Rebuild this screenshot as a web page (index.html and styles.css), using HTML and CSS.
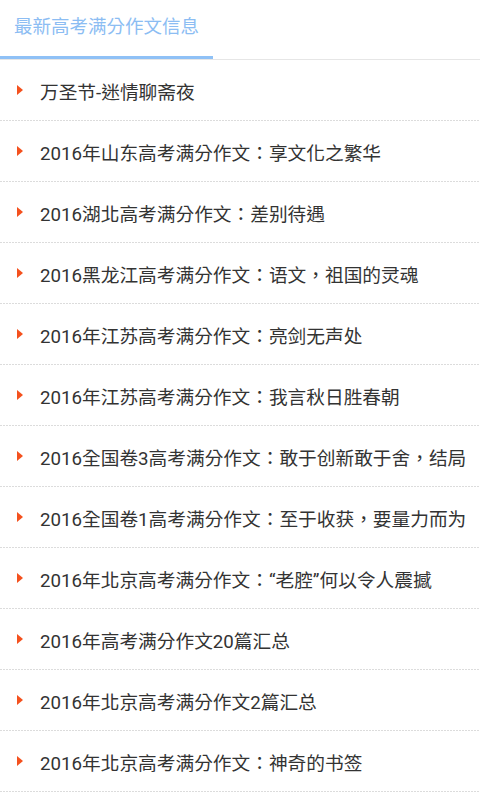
FILE: index.html
```html
<!DOCTYPE html>
<html lang="zh-TW">

<head>
    <meta charset="UTF-8">
    <title>最新高考满分作文信息</title>
    <link rel="stylesheet" href="styles.css">
</head>

<body>

    <div class="header">
        <div class="tab">最新高考满分作文信息</div>
    </div>

    <ul class="list">
        <li><span class="arrow"><svg width="6" height="10" viewBox="0 0 6 10"><polygon points="0,0 6,5 0,10" /></svg></span>万圣节-迷情聊斋夜</li>
        <li><span class="arrow"><svg width="6" height="10" viewBox="0 0 6 10"><polygon points="0,0 6,5 0,10" /></svg></span>2016年山东高考满分作文：享文化之繁华</li>
        <li><span class="arrow"><svg width="6" height="10" viewBox="0 0 6 10"><polygon points="0,0 6,5 0,10" /></svg></span>2016湖北高考满分作文：差别待遇</li>
        <li><span class="arrow"><svg width="6" height="10" viewBox="0 0 6 10"><polygon points="0,0 6,5 0,10" /></svg></span>2016黑龙江高考满分作文：语文，祖国的灵魂</li>
        <li><span class="arrow"><svg width="6" height="10" viewBox="0 0 6 10"><polygon points="0,0 6,5 0,10" /></svg></span>2016年江苏高考满分作文：亮剑无声处</li>
        <li><span class="arrow"><svg width="6" height="10" viewBox="0 0 6 10"><polygon points="0,0 6,5 0,10" /></svg></span>2016年江苏高考满分作文：我言秋日胜春朝</li>
        <li><span class="arrow"><svg width="6" height="10" viewBox="0 0 6 10"><polygon points="0,0 6,5 0,10" /></svg></span>2016全国卷3高考满分作文：敢于创新敢于舍，结局</li>
        <li><span class="arrow"><svg width="6" height="10" viewBox="0 0 6 10"><polygon points="0,0 6,5 0,10" /></svg></span>2016全国卷1高考满分作文：至于收获，要量力而为</li>
        <li><span class="arrow"><svg width="6" height="10" viewBox="0 0 6 10"><polygon points="0,0 6,5 0,10" /></svg></span>2016年北京高考满分作文：“老腔”何以令人震撼</li>
        <li><span class="arrow"><svg width="6" height="10" viewBox="0 0 6 10"><polygon points="0,0 6,5 0,10" /></svg></span>2016年高考满分作文20篇汇总</li>
        <li><span class="arrow"><svg width="6" height="10" viewBox="0 0 6 10"><polygon points="0,0 6,5 0,10" /></svg></span>2016年北京高考满分作文2篇汇总</li>
        <li><span class="arrow"><svg width="6" height="10" viewBox="0 0 6 10"><polygon points="0,0 6,5 0,10" /></svg></span>2016年北京高考满分作文：神奇的书签</li>
    </ul>

</body>

</html>
```

FILE: styles.css
```css
body {
    margin: 0;
    background: #fff;
    font-family: Roboto, "Noto Sans CJK TC", sans-serif;
    overflow: hidden;
}

.header {
    height: 59px;
    border-bottom: 1px solid #e6e6e6;
}

.tab {
    width: 213px;
    height: 59px;
    line-height: 54px;
    padding-left: 14px;
    box-sizing: border-box;
    border-bottom: 3px solid #8fc1f6;
    color: #8cbdf3;
    font-size: 18.5px;
    white-space: nowrap;
}

.list {
    margin: 0;
    padding: 0;
    list-style: none;
}

.list li {
    display: flex;
    align-items: center;
    height: 60px;
    padding-bottom: 1px;
    color: #333;
    font-size: 18.7px;
    white-space: nowrap;
    background: repeating-linear-gradient(to right, #dcdcdc 0 2px, transparent 2px 3px) left bottom / 100% 1px no-repeat;
}

.arrow {
    display: flex;
    width: 40px;
    padding-left: 17px;
    box-sizing: border-box;
}

.arrow polygon {
    fill: #f4511e;
}
```
